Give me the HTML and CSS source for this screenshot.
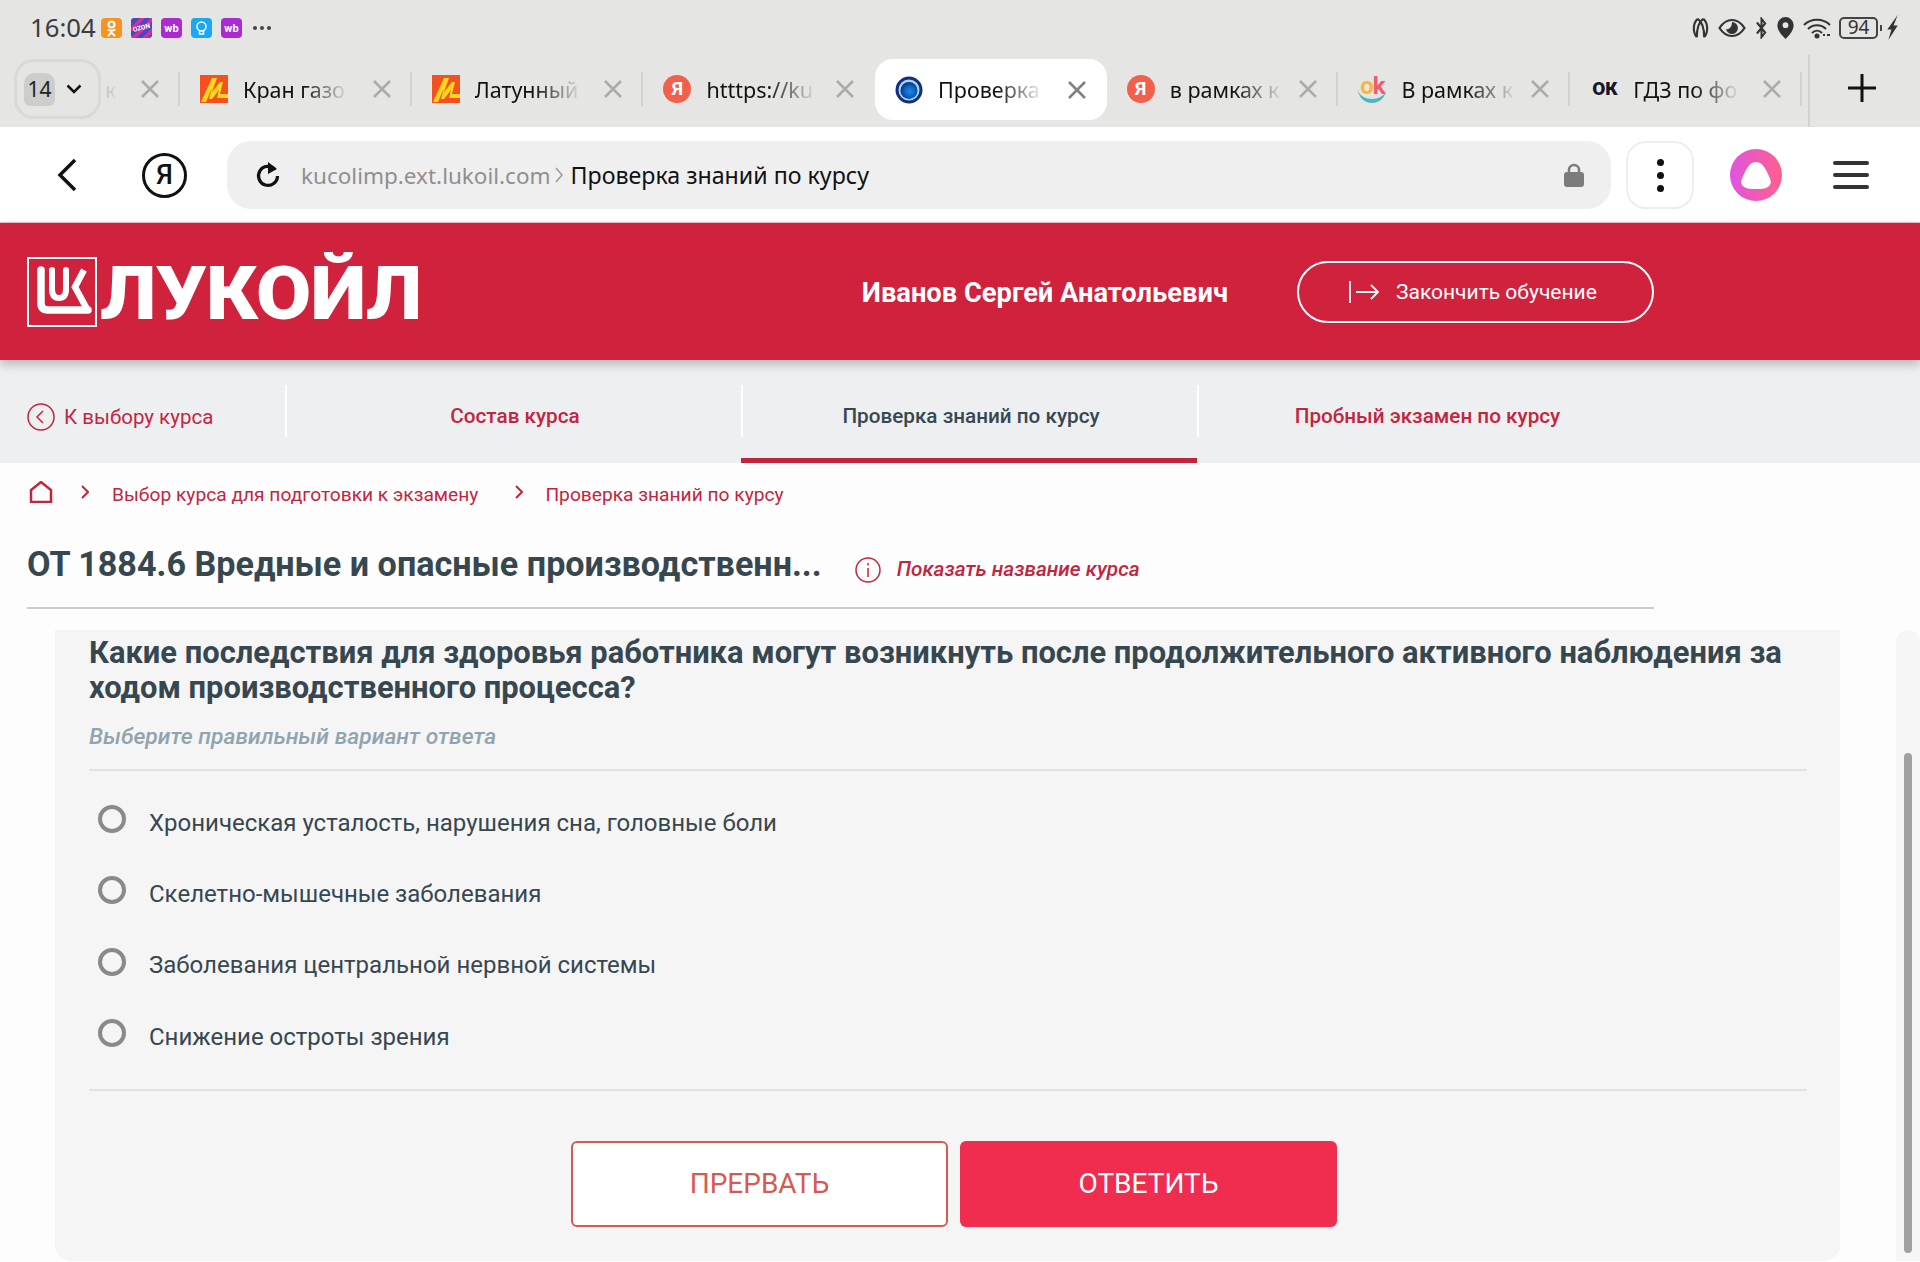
FILE: index.html
```html
<!DOCTYPE html>
<html lang="ru">

<head>
    <meta charset="UTF-8">
    <meta name="viewport" content="width=device-width, initial-scale=1.0">
    <title>Проверка знаний по курсу</title>
    <link rel="stylesheet" href="styles.css">
</head>

<body>
    <!-- status bar -->
    <div class="status">
        <span class="time">16:04</span>
        <div class="apps">
            <svg class="app" viewBox="0 0 21 20"><rect width="21" height="20" rx="4" fill="#f7931e"/><circle cx="10.5" cy="6.5" r="3" fill="none" stroke="#fff" stroke-width="2"/><path d="M6.5 11.5c2.500 1.500 5.500 1.500 8 0M10.500 13v1.500M7 18l3.500-3.500L14 18" fill="none" stroke="#fff" stroke-width="2"/></svg>
            <svg class="app" viewBox="0 0 21 20"><rect width="21" height="20" rx="3" fill="#4a46c8"/><path d="M0 9L9 0h5L0 14zM0 20L20 0h1v4L5 20zM11 20l10-10v5l-5 5z" fill="#d62f9c"/><text class="app-txt" x="10.500" y="12" font-size="6.500" text-anchor="middle" transform="rotate(-14 10 10)">OZON</text></svg>
            <svg class="app" viewBox="0 0 21 20"><rect width="21" height="20" rx="4" fill="#a92bd1"/><text class="app-txt" x="10.500" y="14" font-size="11" text-anchor="middle">wb</text></svg>
            <svg class="app" viewBox="0 0 21 20"><rect width="21" height="20" rx="4" fill="#1aa7f5"/><circle cx="10.500" cy="8.500" r="4.500" fill="none" stroke="#fff" stroke-width="1.500"/><path d="M8.500 13v3h4v-3" fill="none" stroke="#fff" stroke-width="1.500"/></svg>
            <svg class="app" viewBox="0 0 21 20"><rect width="21" height="20" rx="4" fill="#a92bd1"/><text class="app-txt" x="10.500" y="14" font-size="11" text-anchor="middle">wb</text></svg>
            <span class="more"><i></i><i></i><i></i></span>
        </div>
        <div class="sys">
            <svg class="sys-link" viewBox="0 0 18 24"><path d="M6 2C1 6 0 16 5 22M12 2c5 4 6 14 1 20M6 2c6 4 7 14 7 20M12 2C6 6 5 16 5 22" fill="none" stroke="#333" stroke-width="2.300"/></svg>
            <svg class="sys-eye" viewBox="0 0 28 20"><path d="M1.500 10C6 3 10 2 14 2s8 1 12.500 8C22 17 18 18 14 18s-8-1-12.500-8z" fill="none" stroke="#333" stroke-width="2.200"/><path d="M14 4a6 6 0 1 1-6 7c3 1 6-2 6-7z" fill="#333"/></svg>
            <svg class="sys-bt" viewBox="0 0 14 24"><path d="M2 6l9 11-4 5V2l4 5-9 11" fill="none" stroke="#333" stroke-width="2.200"/></svg>
            <svg class="sys-pin" viewBox="0 0 17 23"><path d="M8.500 0a8.500 8.500 0 0 1 8.500 8.500c0 6-5 11-8.500 14.500C5 19.500 0 14.500 0 8.500A8.500 8.500 0 0 1 8.500 0z" fill="#333"/><circle cx="8.500" cy="8.500" r="3" fill="#e5e5e3"/></svg>
            <svg class="sys-wifi" viewBox="0 0 28 22"><path d="M1 8c7-7 19-7 26 0M5 12c5-5 13-5 18 0M9 16c3-3 7-3 10 0" fill="none" stroke="#333" stroke-width="2"/><circle cx="14" cy="19" r="2.500" fill="#333"/><path d="M20 18h2M24 18h3" stroke="#333" stroke-width="2"/></svg>
            <span class="battery">94</span>
            <span class="battery-tip"></span>
            <svg class="sys-bolt" viewBox="0 0 10 24"><path d="M10 0L0 14h4L1 24 10 10H6z" fill="#333"/></svg>
        </div>
    </div>

    <!-- tab strip -->
    <div class="tabs">
        <div class="switcher">
            <span class="count">14</span>
            <svg class="chev" viewBox="0 0 16 10"><path d="M1.500 1.500L8 8l6.500-6.500" fill="none" stroke="#111" stroke-width="2.500"/></svg>
        </div>
        <div class="tab tab-first">
            <span class="tab-title">к</span>
            <svg class="tab-x" viewBox="0 0 18 18"><path d="M1 1l16 16M17 1L1 17"/></svg>
        </div>
        <div class="tab">
            <svg class="fav" viewBox="0 0 28 28"><rect width="28" height="28" fill="#f4511e"/><path d="M1 27L12 3h5l-5 14 8-10h3l-3 12h8v4H17l2-8-7 9H9l3-11-6 14z" fill="#ffd61e"/></svg>
            <span class="tab-title">Кран газо</span>
            <svg class="tab-x" viewBox="0 0 18 18"><path d="M1 1l16 16M17 1L1 17"/></svg>
        </div>
        <div class="tab">
            <svg class="fav" viewBox="0 0 28 28"><rect width="28" height="28" fill="#f4511e"/><path d="M1 27L12 3h5l-5 14 8-10h3l-3 12h8v4H17l2-8-7 9H9l3-11-6 14z" fill="#ffd61e"/></svg>
            <span class="tab-title">Латунный</span>
            <svg class="tab-x" viewBox="0 0 18 18"><path d="M1 1l16 16M17 1L1 17"/></svg>
        </div>
        <div class="tab">
            <span class="fav fav-ya">Я</span>
            <span class="tab-title">htttps://ku</span>
            <svg class="tab-x" viewBox="0 0 18 18"><path d="M1 1l16 16M17 1L1 17"/></svg>
        </div>
        <div class="tab tab-active">
            <svg class="fav" viewBox="0 0 28 28"><defs><radialGradient id="orb" cx=".55" cy=".55" r=".55"><stop offset="0" stop-color="#1d8be0"/><stop offset=".6" stop-color="#0c5fc0"/><stop offset="1" stop-color="#0b2f86"/></radialGradient></defs><circle cx="14" cy="14" r="13.500" fill="#12307f"/><circle cx="14" cy="14" r="10.500" fill="#a9d4ee"/><circle cx="14" cy="14.500" r="8.500" fill="url(#orb)"/></svg>
            <span class="tab-title">Проверка</span>
            <svg class="tab-x" viewBox="0 0 18 18"><path d="M1 1l16 16M17 1L1 17"/></svg>
        </div>
        <div class="tab">
            <span class="fav fav-ya">Я</span>
            <span class="tab-title">в рамках к</span>
            <svg class="tab-x" viewBox="0 0 18 18"><path d="M1 1l16 16M17 1L1 17"/></svg>
        </div>
        <div class="tab">
            <span class="fav fav-ok"><b class="ok-o">o</b><b class="ok-k">k</b></span>
            <span class="tab-title">В рамках к</span>
            <svg class="tab-x" viewBox="0 0 18 18"><path d="M1 1l16 16M17 1L1 17"/></svg>
        </div>
        <div class="tab">
            <span class="fav fav-ok2">ОК</span>
            <span class="tab-title">ГДЗ по фо</span>
            <svg class="tab-x" viewBox="0 0 18 18"><path d="M1 1l16 16M17 1L1 17"/></svg>
        </div>
        <div class="plus">
            <svg viewBox="0 0 28 28"><path d="M14 0v28M0 14h28" stroke="#111" stroke-width="3"/></svg>
        </div>
    </div>

    <!-- browser toolbar -->
    <div class="toolbar">
        <svg class="back" viewBox="0 0 20 34"><path d="M18 2L3 17l15 15" fill="none" stroke="#111" stroke-width="3.500"/></svg>
        <span class="ya-btn">Я</span>
        <div class="address">
            <svg class="reload" viewBox="0 0 26 28"><path d="M20 8.500A9.500 9.500 0 1 0 22.500 15" fill="none" stroke="#111" stroke-width="3.200"/><path d="M13 1l9 7-9 5z" fill="#111"/></svg>
            <span class="host">kucolimp.ext.lukoil.com</span>
            <svg class="crumb-arrow" viewBox="0 0 8 16"><path d="M1 1l6 7-6 7" fill="none" stroke="#999" stroke-width="1.500"/></svg>
            <span class="page-name">Проверка знаний по курсу</span>
            <svg class="lock" viewBox="0 0 20 24"><path d="M5 10V7a5 5 0 0 1 10 0v3" fill="none" stroke="#7c7c7c" stroke-width="2.500"/><rect y="9" width="20" height="15" rx="3" fill="#7c7c7c"/></svg>
        </div>
        <div class="menu-btn"><i></i><i></i><i></i></div>
        <svg class="alice" viewBox="0 0 52 52"><defs><linearGradient id="al" x1="0" y1="0" x2="1" y2="0"><stop offset="0" stop-color="#df55e0"/><stop offset="1" stop-color="#ff5f8c"/></linearGradient></defs><ellipse cx="26" cy="26" rx="26" ry="26" fill="url(#al)"/><path d="M26 13c5 0 8 4 11 10 3 6 5 10 3 13-3 4-8 4-14 4s-11 0-14-4c-2-3 0-7 3-13 3-6 6-10 11-10z" fill="#fff"/></svg>
        <div class="burger"><i></i><i></i><i></i></div>
    </div>

    <!-- site header -->
    <header class="site-header">
        <div class="logo">
            <svg class="logo-mark" viewBox="0 0 70 70"><rect x="1" y="1" width="68" height="68" fill="none" stroke="#fff" stroke-width="2"/><g fill="none" stroke="#fff" stroke-linecap="round"><path d="M14 13v33q0 7 7 7h40" stroke-width="7.500"/><path d="M25 13v19q0 9 7 9t7-9V13" stroke-width="6"/><path d="M57 13L48 30l12 22" stroke-width="6.500" stroke-linejoin="miter" stroke-linecap="butt"/></g></svg>
            <span class="logo-word">ЛУКОЙЛ</span>
        </div>
        <span class="user-name">Иванов Сергей Анатольевич</span>
        <a class="finish-btn">
            <svg viewBox="0 0 30 24"><path d="M1 1v22M7 12h22M22 5l7 7-7 7" fill="none" stroke="#fff" stroke-width="1.800"/></svg>
            Закончить обучение
        </a>
    </header>

    <!-- course nav -->
    <nav class="course-nav">
        <a class="nav-back">
            <svg viewBox="0 0 28 28"><circle cx="14" cy="14" r="13" fill="none" stroke="#c3253f" stroke-width="1.500"/><path d="M16 8l-6 6 6 6" fill="none" stroke="#c3253f" stroke-width="1.500"/></svg>
            К выбору курса
        </a>
        <a class="nav-item">Состав курса</a>
        <a class="nav-item nav-active">Проверка знаний по курсу</a>
        <a class="nav-item">Пробный экзамен по курсу</a>
    </nav>

    <!-- breadcrumbs -->
    <div class="crumbs">
        <svg class="home" viewBox="0 0 24 22"><path d="M2 21V9l10-8 10 8v12z" fill="none" stroke="#c3253f" stroke-width="2.500"/></svg>
        <svg class="sep" viewBox="0 0 8 14"><path d="M1 1l6 6-6 6" fill="none" stroke="#c3253f" stroke-width="2"/></svg>
        <a>Выбор курса для подготовки к экзамену</a>
        <svg class="sep" viewBox="0 0 8 14"><path d="M1 1l6 6-6 6" fill="none" stroke="#c3253f" stroke-width="2"/></svg>
        <a>Проверка знаний по курсу</a>
    </div>

    <div class="course-title">
        <h1>ОТ 1884.6 Вредные и опасные производственн...</h1>
        <svg class="info" viewBox="0 0 26 26"><circle cx="13" cy="13" r="12" fill="none" stroke="#c3253f" stroke-width="1.500"/><path d="M13 11v9M13 6v2.500" stroke="#c3253f" stroke-width="1.500"/></svg>
        <a class="show-name">Показать название курса</a>
    </div>

    <div class="work">
        <section class="card">
            <h2>Какие последствия для здоровья работника могут возникнуть после продолжительного активного наблюдения за ходом производственного процесса?</h2>
            <p class="hint">Выберите правильный вариант ответа</p>
            <div class="options">
                <label class="option"><span class="radio"></span>Хроническая усталость, нарушения сна, головные боли</label>
                <label class="option"><span class="radio"></span>Скелетно-мышечные заболевания</label>
                <label class="option"><span class="radio"></span>Заболевания центральной нервной системы</label>
                <label class="option"><span class="radio"></span>Снижение остроты зрения</label>
            </div>
            <div class="actions">
                <button class="btn btn-stop">ПРЕРВАТЬ</button>
                <button class="btn btn-answer">ОТВЕТИТЬ</button>
            </div>
        </section>
        <div class="scroll"><div class="scroll-thumb"></div></div>
    </div>
</body>

</html>
```
FILE: styles.css
```css
* {
    margin: 0;
    padding: 0;
    box-sizing: border-box;
}

html,
body {
    width: 1920px;
    height: 1262px;
    overflow: hidden;
}

body {
    background: #fdfdfd;
    font-family: Roboto, sans-serif;
}

svg {
    display: block;
    flex: none;
}

/* status bar */
.status {
    height: 58px;
    padding: 0 22px 3px 30px;
    background: #e5e5e3;
    display: flex;
    align-items: center;
    font-family: "Noto Sans", sans-serif;
}

.time {
    font-size: 25.7px;
    color: #3c3c3c;
    width: 71px;
}

.apps {
    display: flex;
    align-items: center;
    gap: 9px;
}

.app {
    width: 21px;
    height: 20px;
}

.app-txt {
    fill: #fff;
    font-family: Roboto, sans-serif;
    font-weight: 700;
}

.more {
    display: flex;
    gap: 3px;
    margin-left: 2px;
}

.more i {
    width: 4px;
    height: 4px;
    border-radius: 50%;
    background: #444;
}

.sys {
    margin-left: auto;
    display: flex;
    align-items: center;
}

.sys-link {
    width: 17px;
    height: 22px;
}

.sys-eye {
    width: 28px;
    height: 20px;
    margin-left: 9px;
}

.sys-bt {
    width: 13px;
    height: 22px;
    margin-left: 9px;
}

.sys-pin {
    width: 17px;
    height: 22px;
    margin-left: 9px;
}

.sys-wifi {
    width: 28px;
    height: 22px;
    margin-left: 9px;
}

.battery {
    width: 39px;
    height: 22px;
    margin-left: 8px;
    border: 2px solid #444;
    border-radius: 5px;
    font-size: 19px;
    line-height: 17px;
    text-align: center;
    color: #333;
}

.battery-tip {
    width: 2px;
    height: 6px;
    margin-left: 2px;
    background: #444;
}

.sys-bolt {
    width: 11px;
    height: 25px;
    margin-left: 5px;
}

/* tabs */
.tabs {
    height: 69px;
    padding-left: 14px;
    background: #e5e5e3;
    display: flex;
    align-items: flex-start;
    font-family: "Noto Sans", sans-serif;
}

.switcher {
    width: 87px;
    height: 60px;
    margin-top: 1px;
    border: 3px solid #d9d9d7;
    border-radius: 20px;
    display: flex;
    align-items: center;
    padding-left: 7px;
    gap: 11px;
}

.count {
    width: 31px;
    height: 33px;
    border-radius: 10px 10px 6px 6px;
    background: #cdcdcb;
    font-size: 21px;
    line-height: 33px;
    text-align: center;
    color: #222;
}

.chev {
    width: 16px;
    height: 10px;
}

.tab {
    width: 231.7px;
    height: 62px;
    padding: 0 21px 0 20px;
    display: flex;
    align-items: center;
    background: linear-gradient(#d2d2d0, #d2d2d0) right center / 2px 34px no-repeat;
}

.tab-first {
    width: 79px;
    padding: 0 21px 0 4px;
    justify-content: space-between;
}

.tab-first .tab-title {
    margin: 0;
    color: #c8c8c6;
}

.tab-active {
    background: #fff;
    border-radius: 18px;
    height: 61px;
    margin-top: 1px;
}

.tab-active .tab-x {
    stroke: #808080;
}

.tab:nth-child(5) {
    background: none;
}

.fav {
    width: 28px;
    height: 28px;
}

.fav-ya {
    border-radius: 50%;
    background: #f2604c;
    color: #fff;
    font-family: Roboto, sans-serif;
    font-weight: 700;
    font-size: 19px;
    line-height: 28px;
    text-align: center;
}

.fav-ok {
    font-family: Roboto, sans-serif;
    font-size: 24px;
    line-height: 22px;
    text-align: center;
    border-bottom: 4px solid #4fb6c0;
    border-radius: 0 0 14px 14px;
    letter-spacing: -1px;
}

.ok-o {
    color: #f5b93a;
}

.ok-k {
    color: #ee5a6f;
}

.fav-ok2 {
    font-family: Roboto, sans-serif;
    font-weight: 900;
    font-size: 19px;
    line-height: 28px;
    color: #16162a;
    margin-left: 2px;
    width: 26px;
}

.tab-title {
    margin-left: 15px;
    white-space: nowrap;
    font-size: 21.5px;
    color: #111;
    -webkit-mask-image: linear-gradient(90deg, #000 58%, rgba(0, 0, 0, .08) 100%);
    mask-image: linear-gradient(90deg, #000 58%, rgba(0, 0, 0, .08) 100%);
}

.tab-x {
    width: 18px;
    height: 18px;
    margin-left: auto;
    fill: none;
    stroke: #ababa9;
    stroke-width: 2.500;
}

.plus {
    width: 106px;
    height: 72px;
    margin: -3px 0 0 6px;
    border-left: 2px solid #d2d2d0;
    display: flex;
    align-items: center;
    justify-content: center;
    padding-bottom: 6px;
}

.plus svg {
    width: 28px;
    height: 28px;
}

/* toolbar */
.toolbar {
    height: 96px;
    padding-top: 1px;
    background: #fff;
    border-bottom: 1px solid #e8c3ca;
    display: flex;
    align-items: center;
    font-family: "Noto Sans", sans-serif;
}

.back {
    width: 20px;
    height: 34px;
    margin-left: 57px;
}

.ya-btn {
    width: 45px;
    height: 45px;
    margin-left: 65px;
    border: 3.5px solid #111;
    border-radius: 50%;
    font-family: Roboto, sans-serif;
    font-weight: 500;
    font-size: 27px;
    line-height: 38px;
    text-align: center;
    color: #111;
}

.address {
    width: 1384px;
    height: 68px;
    margin-left: 40px;
    border-radius: 24px;
    background: #efefef;
    display: flex;
    align-items: center;
    padding: 0 27px 0 28px;
}

.reload {
    width: 26px;
    height: 28px;
}

.host {
    margin-left: 20px;
    font-size: 22.5px;
    color: #8f8f8f;
}

.crumb-arrow {
    width: 8px;
    height: 16px;
    margin: 0 8px 0 4px;
}

.page-name {
    font-size: 23.2px;
    color: #111;
}

.lock {
    width: 20px;
    height: 24px;
    margin-left: auto;
}

.menu-btn {
    width: 68px;
    height: 68px;
    margin-left: 15px;
    border: 2px solid #eee;
    border-radius: 20px;
    display: flex;
    flex-direction: column;
    align-items: center;
    justify-content: center;
    gap: 6px;
}

.menu-btn i {
    width: 7px;
    height: 7px;
    border-radius: 50%;
    background: #111;
}

.alice {
    width: 52px;
    height: 52px;
    margin-left: 36px;
}

.burger {
    width: 36px;
    margin-left: 51px;
    display: flex;
    flex-direction: column;
    gap: 8px;
}

.burger i {
    height: 4px;
    border-radius: 2px;
    background: #333;
}

/* site header */
.site-header {
    height: 137px;
    padding: 0 266px 0 27px;
    background: #d0223c;
    box-shadow: 0 4px 10px rgba(0, 0, 0, .25);
    position: relative;
    display: flex;
    align-items: center;
    color: #fff;
}

.logo {
    display: flex;
    align-items: center;
    height: 70px;
}

.logo-mark {
    width: 70px;
    height: 70px;
}

.logo-word {
    margin: 2px 0 0 3px;
    font-weight: 900;
    font-size: 75px;
    line-height: 70px;
    letter-spacing: -.5px;
    transform: scaleX(1.067);
    transform-origin: left center;
}

.user-name {
    margin: 2px 0 0 auto;
    font-weight: 700;
    font-size: 27.3px;
}

.finish-btn {
    width: 357px;
    height: 62px;
    margin-left: 69px;
    padding-left: 50px;
    border: 2px solid #fff;
    border-radius: 31px;
    display: flex;
    align-items: center;
    gap: 17px;
    font-size: 21px;
}

.finish-btn svg {
    width: 30px;
    height: 24px;
}

/* course nav */
.course-nav {
    height: 103px;
    padding-right: 266px;
    background: #eeeff1;
    display: grid;
    grid-template-columns: 285px 456px 456px 457px;
    font-size: 20.7px;
    font-weight: 500;
    color: #c3253f;
}

.nav-back {
    padding: 10px 0 0 27px;
    display: flex;
    align-items: center;
    gap: 9px;
    font-weight: 400;
    font-size: 20.5px;
}

.nav-back svg {
    width: 28px;
    height: 28px;
}

.nav-item {
    display: flex;
    align-items: center;
    justify-content: center;
    padding: 9px 0 0 4px;
    background: linear-gradient(#fff, #fff) left 25px / 2px 52px no-repeat;
}

.nav-active {
    padding-top: 14px;
    color: #37474f;
    border-bottom: 5px solid #c3253f;
}

/* breadcrumbs */
.crumbs {
    height: 62px;
    padding-left: 29px;
    display: flex;
    align-items: center;
    font-size: 19.2px;
    color: #c3253f;
}

.home {
    width: 24px;
    height: 22px;
    margin-bottom: 4px;
}

.sep {
    width: 8px;
    height: 14px;
    margin: 0 23px 4px 28px;
}

.sep:nth-of-type(3) {
    margin: 0 22px 4px 37px;
}

/* course title */
.course-title {
    height: 84px;
    width: 1627px;
    margin: 0 0 21px 27px;
    border-bottom: 2px solid #ccc;
    display: flex;
    align-items: center;
    color: #c3253f;
}

.course-title h1 {
    font-size: 34.15px;
    font-weight: 700;
    color: #37474f;
    margin-bottom: 5px;
}

.info {
    width: 26px;
    height: 26px;
    margin: 8px 16px 0 33px;
}

.show-name {
    font-size: 20.8px;
    font-weight: 500;
    font-style: italic;
    margin-top: 6px;
}

/* question */
.work {
    display: flex;
    align-items: flex-start;
    margin-left: 55px;
}

.card {
    width: 1785px;
    height: 631px;
    padding: 5px 33px 0 34px;
    background: #f5f5f5;
    border-radius: 0 0 16px 16px;
    color: #37474f;
}

.card h2 {
    font-size: 30.9px;
    line-height: 35px;
    font-weight: 700;
}

.hint {
    margin-top: 17px;
    padding-bottom: 17px;
    border-bottom: 2px solid #e2e2e2;
    font-size: 22.9px;
    line-height: 30px;
    font-weight: 500;
    font-style: italic;
    color: #90a4ae;
}

.options {
    padding: 16px 0 17px;
    border-bottom: 2px solid #e2e2e2;
}

.option {
    height: 71.300px;
    display: flex;
    align-items: center;
    font-size: 24px;
}

.radio {
    width: 28px;
    height: 28px;
    margin: 0 23px 7px 9px;
    border: 4px solid #8a8a8a;
    border-radius: 50%;
}

.actions {
    margin-top: 50px;
    padding-left: 12px;
    display: flex;
    justify-content: center;
    gap: 12px;
}

.btn {
    width: 377px;
    height: 86px;
    padding-bottom: 2px;
    border-radius: 6px;
    font-family: Roboto, sans-serif;
    font-size: 28px;
}

.btn-stop {
    background: #fff;
    border: 2px solid #d9584f;
    color: #d9584f;
}

.btn-answer {
    background: #f02c4f;
    border: none;
    color: #fff;
}

/* scrollbar */
.scroll {
    width: 24px;
    height: 631px;
    margin-left: 56px;
    padding-top: 123px;
    background: #f6f6f6;
    border-radius: 12px 12px 0 0;
}

.scroll-thumb {
    width: 8px;
    height: 500px;
    margin: 0 auto;
    border-radius: 4px;
    background: #a0a0a0;
}
```
